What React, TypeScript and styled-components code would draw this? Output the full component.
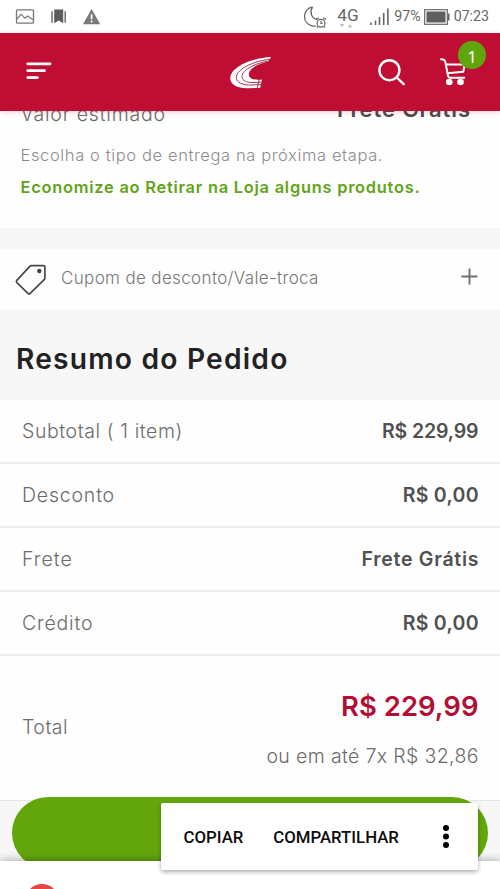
import React from "react";
import styled, { createGlobalStyle } from "styled-components";

const Global = createGlobalStyle`
  *, *::before, *::after { box-sizing: border-box; }
  body { margin: 0; background: #fff; }
`;

const Screen = styled.main`
  position: relative;
  display: flex;
  flex-direction: column;
  width: 500px;
  height: 889px;
  overflow: hidden;
  background: #fefefe;
  font-family: Inter, "Open Sans", sans-serif;
`;

const StatusBar = styled.div`
  display: flex;
  flex: none;
  justify-content: space-between;
  align-items: center;
  height: 33px;
  padding: 0 11px 0 15px;
  background: #fff;
  color: #666;
  font-family: Roboto, sans-serif;
`;

const StatusGroup = styled.div`
  display: flex;
  align-items: center;
  height: 33px;
`;

const StatusText = styled.span<{ $size?: number }>`
  font-size: ${(p) => p.$size ?? 14.2}px;
  line-height: 35px;
  white-space: nowrap;
`;

const Header = styled.header`
  position: relative;
  z-index: 2;
  display: grid;
  flex: none;
  grid-template-columns: 1fr auto 1fr;
  height: 78px;
  background: #c00d34;
  box-shadow: 0 1px 5px rgba(192, 13, 52, 0.22);
`;

const HeaderActions = styled.div`
  display: flex;
  justify-content: flex-end;
  padding-right: 10px;
`;

const SearchButton = styled.div`
  width: 60px;
  height: 78px;
`;

const CartButton = styled.div`
  position: relative;
  width: 56px;
  height: 78px;
`;

const CartBadge = styled.span`
  position: absolute;
  top: 8px;
  right: 4px;
  width: 28px;
  height: 28px;
  padding-top: 2px;
  border-radius: 50%;
  background: #60a50c;
  color: #fff;
  font: 400 17px/28px "Noto Sans", sans-serif;
  text-align: center;
`;

const Label = styled.span<{ $size?: number; $spacing?: number; $color?: string }>`
  color: ${(p) => p.$color ?? "#6c6c6c"};
  font-size: ${(p) => p.$size ?? 19.5}px;
  font-weight: 300;
  letter-spacing: ${(p) => p.$spacing ?? 0.8}px;
  margin-right: -${(p) => p.$spacing ?? 0.8}px;
  white-space: nowrap;
`;

const Strong = styled(Label)`
  font-weight: 600;
`;

const Shipping = styled.section`
  flex: none;
  height: 117px;
  padding: 0 30px 0 20.5px;
`;

const ShippingRow = styled.div`
  display: flex;
  justify-content: space-between;
  height: 32px;
  margin-top: -13px;
  line-height: 32px;
`;

const ShippingValue = styled(Strong)`
  line-height: 22px;
`;

const ShippingNote = styled.p`
  height: 32px;
  margin: 0;
  line-height: 32px;
`;

const ShippingHint = styled(ShippingNote)`
  margin-top: 9px;
`;

const Divider = styled.div`
  flex: none;
  height: 21px;
  background: #f7f7f7;
`;

const Coupon = styled.section`
  display: flex;
  flex: none;
  align-items: center;
  height: 61px;
  padding: 0 21px 0 14px;
`;

const CouponText = styled.div`
  flex: 1;
  padding: 0 0 4px 13px;
`;

const Title = styled.h1`
  flex: none;
  height: 90px;
  margin: 0;
  padding: 0 0 0 16px;
  background: #f7f7f7;
  color: #222;
  font-size: 28.2px;
  font-weight: 600;
  letter-spacing: 1.2px;
  line-height: 98px;
`;

const SummaryRow = styled.div`
  display: flex;
  flex: none;
  justify-content: space-between;
  align-items: center;
  height: 64px;
  padding: 0 21.5px 1px 22px;
  border-bottom: 2px solid #ebebeb;
`;

const Total = styled.section`
  display: flex;
  flex: none;
  justify-content: space-between;
  align-items: center;
  height: 144px;
  padding: 0 21.5px 2px 22px;
`;

const TotalValues = styled.div`
  display: flex;
  flex-direction: column;
  align-items: flex-end;
  padding-top: 7px;
  line-height: 50px;
`;

const Checkout = styled.div`
  flex: none;
  height: 61px;
  padding: 0 12px;
  border-top: 1px solid #e6e6e6;
  background: #f7f7f7;
`;

const CheckoutButton = styled.div`
  height: 72px;
  margin-top: -4px;
  border-radius: 36px;
  background: #62a60c;
`;

const BottomSheet = styled.div`
  position: relative;
  flex: none;
  height: 28px;
  padding: 23px 25px 0;
  background: #fff;
  box-shadow: 0 -1px 9px rgba(0, 0, 0, 0.3);
`;

const RedDot = styled.div`
  width: 34px;
  height: 34px;
  border-radius: 50%;
  background: #e04a40;
`;

const SelectionMenu = styled.div`
  position: absolute;
  top: 803px;
  left: 161px;
  display: flex;
  align-items: center;
  width: 317px;
  height: 67px;
  padding-left: 22.5px;
  border-radius: 2px;
  background: #fff;
  box-shadow: 0 2px 4px rgba(0, 0, 0, 0.32);
`;

const MenuAction = styled.span`
  margin-right: 30px;
  color: #0c0c0c;
  font: 500 16.8px/68px Roboto, sans-serif;
`;

const MenuDots = styled.svg`
  margin-left: 7px;
`;

const Network = styled.div`
  position: relative;
  width: 33px;
  padding-left: 1px;
  margin-top: -3px;
`;

const DataArrows = styled.svg`
  position: absolute;
  left: 4px;
  top: 25px;
`;

const rows = [
  { label: "Subtotal ( 1 item)", ls: 0.6, value: "R$ 229,99", vs: -0.1 },
  { label: "Desconto", ls: 0.8, value: "R$ 0,00", vs: 0.3 },
  { label: "Frete", ls: 1, value: "Frete Grátis", vs: 0.72 },
  { label: "Crédito", ls: 0.8, value: "R$ 0,00", vs: 0.3 },
];

const Notifications = () => (
  <svg width="90" height="33" viewBox="15 0 90 33">
    <rect x="16.5" y="9.8" width="17" height="13.4" rx="1" fill="none" stroke="#777" strokeWidth="1.3" />
    <path d="M17 19l4.2-4.7 3.8 4 2.6-2.2 5.8 3.9" fill="none" stroke="#777" strokeWidth="1.2" />
    <path d="M54.2 9.4h9v13.8l-4.5-2.8-4.5 2.8z" fill="#5c5c5c" />
    <path d="M52 11.2v11.6M65.2 11.2v11.6" stroke="#707070" strokeWidth="1.5" />
    <path d="M91.6 9l8.6 15.3H83z" fill="#7a7a7a" />
    <path d="M91.6 14.4v5" stroke="#fff" strokeWidth="1.7" />
    <circle cx="91.6" cy="21.6" r="1" fill="#fff" />
  </svg>
);

const MoonAlarm = () => (
  <svg width="34" height="33" viewBox="302 0 34 33">
    <path d="M312.500 6.800c-10.500 2.200-10.500 16.700-.5 19 1.300.3 2.600.3 3.800 0M312.500 6.800c-3.200 5.500-1 11.700 4.800 12.800" fill="none" stroke="#666" strokeWidth="1.3" />
    <circle cx="321" cy="23.200" r="3.900" fill="#fff" stroke="#666" strokeWidth="1.2" />
    <path d="M321 21v2.400h1.600M316.800 20v-1.500l2-.4M325.200 20v-1.500l-2-.4M317.800 26.400l-.8 1.300M324.200 26.400l.8 1.300" fill="none" stroke="#666" strokeWidth="1.2" />
  </svg>
);

const Signal = () => (
  <svg width="25" height="33" viewBox="369 0 25 33">
    <path d="M371 22.500v2.500M375.500 20.500v4.500M379.500 17v8M383.700 13v12M387.900 8.500v16.500" stroke="#666" strokeWidth="1.6" />
  </svg>
);

const Battery = () => (
  <svg width="33" height="33" viewBox="421 0 33 33">
    <rect x="424.700" y="9.700" width="22.600" height="14.600" fill="none" stroke="#666" strokeWidth="1.2" />
    <rect x="426.500" y="11.500" width="19" height="11" fill="#5e5e5e" />
    <path d="M448.700 13.500v7" stroke="#666" strokeWidth="1.6" />
  </svg>
);

const MenuIcon = () => (
  <svg width="60" height="78" viewBox="0 33 60 78">
    <path d="M27.700 63.800h22.400M27.700 70.700h16.800M27.700 77.600h9.800" stroke="#fff" strokeWidth="2.7" strokeLinecap="round" />
  </svg>
);

const Logo = () => (
  <svg width="44" height="78" viewBox="228 33 44 78">
    <path d="M271 57C252 58 230 67 230.300 78.500c.3 6.500 7.500 10 17.500 9.700l12.300-.2 2-8.500c-9 1-14-1.300-13.200-6 1-5.500 9.500-10 19.600-11.900z" fill="#fff" />
    <path d="M270.500 59.200c-16 1.700-34 9.300-34.200 18.300-.1 5.200 7 7.800 15 7.500l11-.5M270 60.800c-14 2-27.600 8.700-28 15.700-.2 4.800 6 6.300 12 6l8.500-.5M259.300 79l-2.300 9.500" fill="none" stroke="#a51d3c" strokeWidth="0.9" />
  </svg>
);

const SearchIcon = () => (
  <svg width="50" height="78" viewBox="374 33 50 78">
    <g fill="none" stroke="#fff" strokeWidth="2.4" strokeLinecap="round">
      <circle cx="389.400" cy="70.200" r="10" />
      <path d="M396.700 77.500l7 6.700" />
    </g>
  </svg>
);

const CartIcon = () => (
  <svg width="40" height="78" viewBox="434 33 40 78">
    <g fill="none" stroke="#fff" strokeWidth="2" strokeLinecap="round" strokeLinejoin="round">
      <path d="M441 59.200c2.500 0 3.800.6 4.200 2.200l3 15c.2 1 .8 1.300 1.700 1.300h14.300" />
      <path d="M446 64.500h18.600l-1.300 7.200-15.800 1.600" />
    </g>
    <circle cx="449.300" cy="82" r="3.300" fill="#fff" />
    <circle cx="460.500" cy="82" r="3.300" fill="#fff" />
  </svg>
);

const TagIcon = () => (
  <svg width="34" height="36" viewBox="14 261 34 36">
    <path d="M31.300 264.700h12.300c.9 0 1.300.5 1.300 1.300v11c0 .8-.2 1.200-.7 1.700l-14 13.600c-.8.8-1.500.8-2.300 0l-11-10.600c-.8-.8-.8-1.500-.1-2.300l13-14c.4-.5.9-.7 1.500-.7z" fill="none" stroke="#484848" strokeWidth="1.7" />
    <circle cx="39.300" cy="270" r="2.200" fill="#444" />
  </svg>
);

const PlusIcon = () => (
  <svg width="20" height="20" viewBox="0 0 20 20">
    <path d="M10.500 -1.500v16M2.500 6.500h16" stroke="#707070" strokeWidth="1.9" />
  </svg>
);

const PlusSlot = styled.div`
  display: flex;
  svg { overflow: visible; }
`;

export default function App() {
  return (
    <>
      <Global />
      <Screen>
        <StatusBar>
          <Notifications />
          <StatusGroup>
            <MoonAlarm />
            <Network>
              <StatusText $size={17.2}>4G</StatusText>
              <DataArrows width="14" height="6" viewBox="0 0 14 6">
                <path d="M0 1h4L2 4.500zM8 4.500h4L10 1z" fill="#bbb" />
              </DataArrows>
            </Network>
            <Signal />
            <StatusText>97%</StatusText>
            <Battery />
            <StatusText>07:23</StatusText>
          </StatusGroup>
        </StatusBar>

        <Header>
          <MenuIcon />
          <Logo />
          <HeaderActions>
            <SearchButton><SearchIcon /></SearchButton>
            <CartButton>
              <CartIcon />
              <CartBadge>1</CartBadge>
            </CartButton>
          </HeaderActions>
        </Header>

        <Shipping>
          <ShippingRow>
            <Label $size={19.5} $spacing={0.8}>Valor estimado</Label>
            <ShippingValue $size={22} $spacing={0.9} $color="#4b4b4b">Frete Grátis</ShippingValue>
          </ShippingRow>
          <ShippingHint>
            <Label $size={16.5} $spacing={0.62} $color="#8c8c8c">Escolha o tipo de entrega na próxima etapa.</Label>
          </ShippingHint>
          <ShippingNote>
            <Strong $size={16.4} $spacing={0.76} $color="#62a318">Economize ao Retirar na Loja alguns produtos.</Strong>
          </ShippingNote>
        </Shipping>

        <Divider />

        <Coupon>
          <TagIcon />
          <CouponText>
            <Label $size={17} $spacing={0.35} $color="#777">Cupom de desconto/Vale-troca</Label>
          </CouponText>
          <PlusSlot><PlusIcon /></PlusSlot>
        </Coupon>

        <Title>Resumo do Pedido</Title>

        {rows.map((row) => (
          <SummaryRow key={row.label}>
            <Label $spacing={row.ls}>{row.label}</Label>
            <Strong $spacing={row.vs} $color="#505050">{row.value}</Strong>
          </SummaryRow>
        ))}

        <Total>
          <Label $spacing={0.5}>Total</Label>
          <TotalValues>
            <Strong $size={27.5} $spacing={0} $color="#b50e34">R$ 229,99</Strong>
            <Label $spacing={0.36}>ou em até 7x R$ 32,86</Label>
          </TotalValues>
        </Total>

        <Checkout>
          <CheckoutButton />
        </Checkout>
        <BottomSheet>
          <RedDot />
        </BottomSheet>

        <SelectionMenu>
          <MenuAction>COPIAR</MenuAction>
          <MenuAction>COMPARTILHAR</MenuAction>
          <MenuDots width="20" height="30" viewBox="0 0 20 30">
            <circle cx="10" cy="6" r="3" />
            <circle cx="10" cy="14.500" r="3" />
            <circle cx="10" cy="23" r="3" />
          </MenuDots>
        </SelectionMenu>
      </Screen>
    </>
  );
}
